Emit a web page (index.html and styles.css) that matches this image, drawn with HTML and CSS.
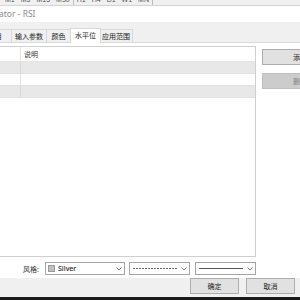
FILE: index.html
```html
<!DOCTYPE html>
<html>
<head>
<meta charset="utf-8">
<link rel="stylesheet" href="styles.css">
</head>
<body>
<div class="screen">
  <div class="tfbar">
    <span class="tf">M1</span><span class="tf">M5</span><span class="tf">M15</span><span class="tf sep">M30</span><span class="tf">H1</span><span class="tf">H4</span><span class="tf">D1</span><span class="tf">W1</span><span class="tf sep">MN</span>
  </div>
  <div class="title">ator - RSI</div>
  <div class="tabs">
    <div class="tab t1">项目</div>
    <div class="tab t2">输入参数</div>
    <div class="tab t3">颜色</div>
    <div class="tab t4 active">水平位</div>
    <div class="tab t5">应用范围</div>
  </div>
  <div class="main">
    <div class="content">
      <div class="table">
        <div class="row head"><div class="c1"></div><div class="c2">说明</div></div>
        <div class="row gray"><div class="c1"></div><div class="c2"></div></div>
        <div class="row"><div class="c1"></div><div class="c2"></div></div>
        <div class="row gray"><div class="c1"></div><div class="c2"></div></div>
      </div>
      <div class="side">
        <button class="btn side-btn">添加</button>
        <button class="btn side-btn disabled">删除</button>
      </div>
    </div>
    <div class="style-row">
      <span class="label">风格:</span>
      <div class="combo c-color"><span class="swatch"></span><span class="ctext">Silver</span><span class="arrow"><svg width="6" height="4" viewBox="0 0 6 4"><path d="M0.5 0.5 L3 3 L5.5 0.5" fill="none" stroke="#555" stroke-width="0.8"/></svg></span></div>
      <div class="combo c-dash"><span class="line dashed"></span><span class="arrow"><svg width="6" height="4" viewBox="0 0 6 4"><path d="M0.5 0.5 L3 3 L5.5 0.5" fill="none" stroke="#555" stroke-width="0.8"/></svg></span></div>
      <div class="combo c-solid"><span class="line solid"></span><span class="arrow"><svg width="6" height="4" viewBox="0 0 6 4"><path d="M0.5 0.5 L3 3 L5.5 0.5" fill="none" stroke="#555" stroke-width="0.8"/></svg></span></div>
    </div>
  </div>
  <div class="footer">
    <button class="btn fbtn">确定</button>
    <button class="btn fbtn">取消</button>
  </div>
  <div class="bottomline"></div>
</div>
</body>
</html>
```
FILE: styles.css
```css
* { box-sizing: border-box; }
html, body { margin: 0; padding: 0; }
body {
  width: 300px;
  height: 300px;
  overflow: hidden;
  background: #ffffff;
  font-family: "Noto Sans CJK SC", "Noto Sans", sans-serif;
}
.screen {
  width: 300px;
  height: 300px;
  display: flex;
  flex-direction: column;
  overflow: hidden;
}
.tfbar {
  height: 6px;
  flex: none;
  background: #f0f0f0;
  border-bottom: 1px solid #d4d4d4;
  display: flex;
  overflow: hidden;
  padding-left: 2px;
}
.tf {
  font-family: "Liberation Sans", sans-serif;
  font-size: 7px;
  color: #555;
  line-height: 8px;
  margin-top: -4px;
  padding: 0 3px;
}
.tf.sep { border-right: 1px solid #bdbdbd; }
.title {
  height: 16px;
  flex: none;
  background: #ffffff;
  font-family: "Noto Sans", sans-serif;
  font-size: 8.5px;
  line-height: 16px;
  color: #8c8c8c;
  margin-left: -1px;
}
.tabs {
  height: 21px;
  flex: none;
  background: #f0f0f0;
  display: flex;
  align-items: flex-end;
  border-bottom: 1px solid #dadada;
  position: relative;
}
.tab {
  height: 13px;
  font-size: 7px;
  line-height: 12px;
  color: #1a1a1a;
  text-align: center;
  border: 1px solid #d9d9d9;
  border-bottom: none;
  border-left: none;
  background: #f0f0f0;
  white-space: nowrap;
  overflow: hidden;
}
.t1 { width: 30px; margin-left: -18px; text-align: right; padding-right: 9px; }
.t2 { width: 35px; }
.t3 { width: 24px; }
.t4 { width: 31px; }
.t5 { width: 33px; }
.tab.active {
  background: #ffffff;
  height: 15px;
  line-height: 13px;
  margin-bottom: -1px;
  border-left: 1px solid #d9d9d9;
  width: 31px;
  margin-left: -1px;
  margin-right: -1px;
  position: relative;
  z-index: 1;
}
.main {
  flex: 1;
  background: #ffffff;
  display: flex;
  flex-direction: column;
  padding-top: 3px;
}
.content {
  display: flex;
  height: 211px;
}
.table {
  width: 256px;
  height: 211px;
  border: 1px solid #cfcfcf;
  border-left: none;
  flex: none;
  background: #fff;
}
.row {
  display: flex;
  height: 12px;
  border-bottom: 1px solid #e2e2e2;
}
.row.head {
  height: 15px;
  border-bottom: 1px solid #e5e5e5;
}
.row.gray { background: #e8e8e8; }
.c1 {
  width: 21px;
  border-right: 1px solid #e3e3e3;
}
.row.gray .c1 { border-right-color: #d8d8d8; }
.c2 {
  flex: 1;
  font-size: 7px;
  line-height: 15px;
  color: #333;
  padding-left: 3px;
}
.side {
  display: flex;
  flex-direction: column;
  padding-left: 6px;
  padding-top: 3px;
  gap: 8px;
  flex: none;
}
.btn {
  font-family: "Noto Sans CJK SC", sans-serif;
  font-size: 7px;
  color: #222;
  background: #e1e1e1;
  border: 1px solid #adadad;
  padding: 0;
  margin: 0;
}
.side-btn {
  width: 76px;
  height: 16px;
  text-align: center;
}
.side-btn.disabled {
  background: #cccccc;
  border-color: #bfbfbf;
  color: #838383;
}
.style-row {
  display: flex;
  align-items: center;
  height: 13px;
  margin-top: 5px;
}
.label {
  font-size: 7px;
  color: #333;
  margin-left: 23px;
  width: 22px;
}
.combo {
  height: 13px;
  border: 1px solid #a5a5a5;
  background: #fff;
  display: flex;
  align-items: center;
}
.c-color { width: 80px; }
.c-dash { width: 61px; margin-left: 4px; }
.c-solid { width: 61px; margin-left: 5px; }
.swatch {
  width: 7px;
  height: 7px;
  background: #c0c0c0;
  border: 1px solid #9a9a9a;
  margin-left: 2px;
}
.ctext {
  font-family: "Noto Sans", sans-serif;
  font-size: 7px;
  color: #222;
  margin-left: 3px;
  font-weight: 500;
}
.arrow {
  margin-left: auto;
  margin-right: 2px;
  display: flex;
}
.line {
  height: 1px;
  margin-left: 3px;
  width: 44px;
}
.line.dashed { background: repeating-linear-gradient(90deg, #666 0 2px, transparent 2px 3px); }
.line.solid { background: #555; }
.footer {
  height: 19px;
  flex: none;
  background: #f0f0f0;
  display: flex;
  justify-content: flex-end;
  align-items: flex-start;
  padding-right: 5px;
  gap: 7px;
}
.fbtn {
  width: 49px;
  height: 16px;
  text-align: center;
}
.bottomline {
  height: 3px;
  flex: none;
  background: #1b1b1b;
}
```
